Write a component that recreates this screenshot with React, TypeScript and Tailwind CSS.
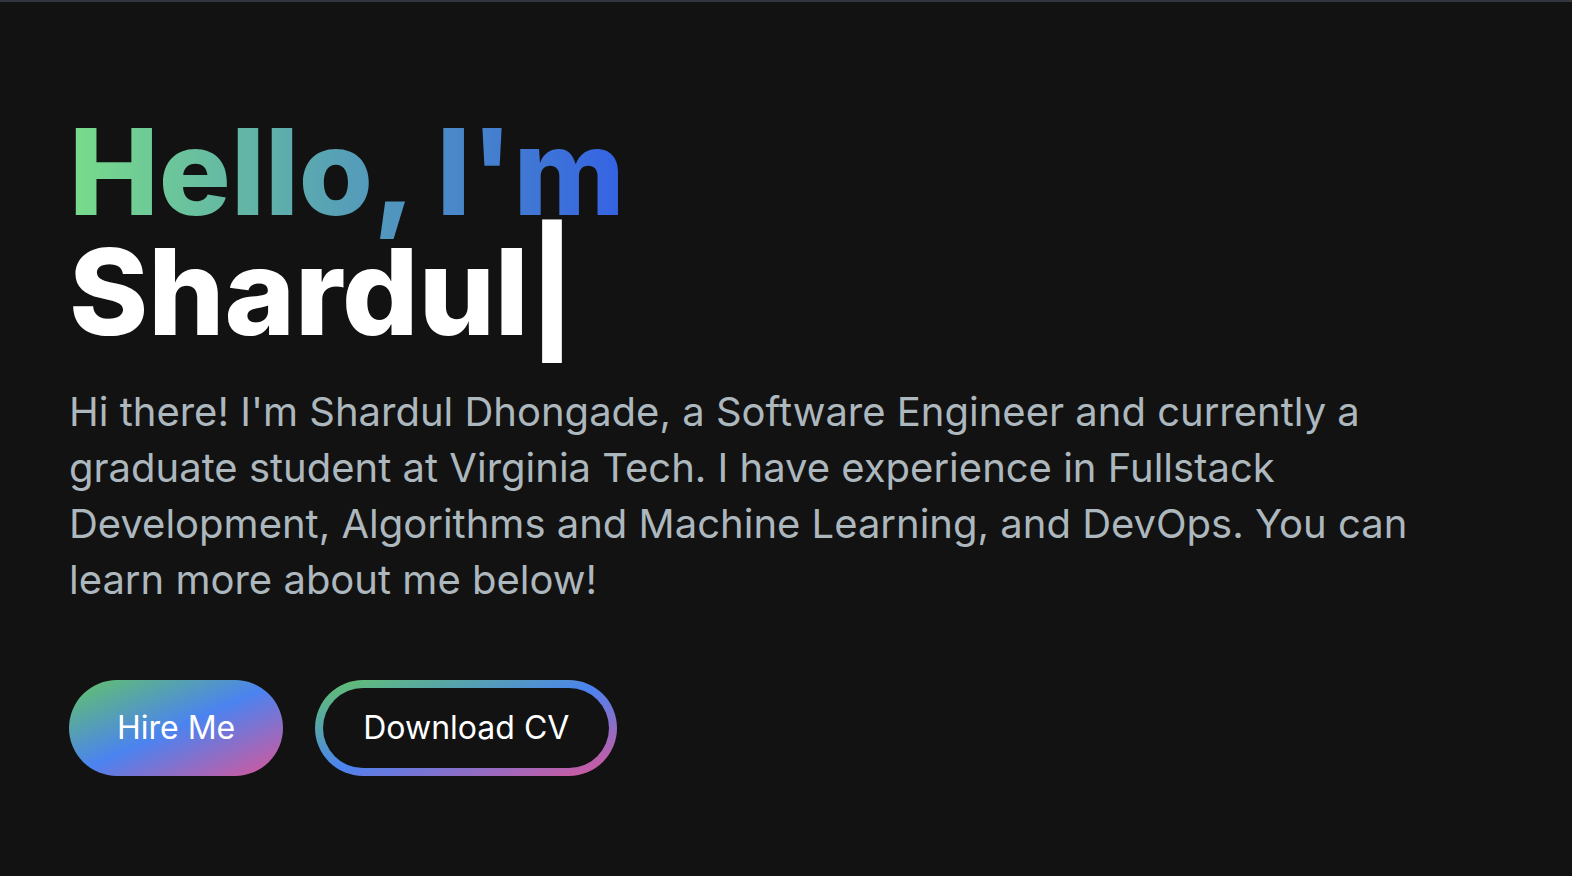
export default function App() {
  return (
    <main className="min-h-screen border-t-2 border-[#33353F] bg-[#121212] px-[69px] pt-[110px] pb-24 font-['Inter',sans-serif]">
      <h1 className="text-[120px] leading-[120px] font-extrabold text-white">
        <span className="bg-linear-to-r/srgb from-[#78dc8a] to-[#3462e4] bg-clip-text text-transparent">Hello, I'm </span>
        <br />
        <span>Shardul|</span>
      </h1>
      <p className="mt-8 max-w-[1360px] text-[40px] leading-[56px] text-[#ADB7BE]">
        Hi there! I'm Shardul Dhongade, a Software Engineer and currently a graduate student at Virginia Tech. I have experience in Fullstack Development, Algorithms and Machine Learning, and DevOps. You can learn more about me below!
      </p>
      <div className="mt-[72px] flex flex-wrap gap-8 text-[32px] leading-[48px] text-white">
        <a href="#contact" className="rounded-full bg-linear-to-br/srgb from-[#63c466] via-[#4b83f0] to-[#da5597] px-12 py-6">Hire Me</a>
        <a href="#cv" className="rounded-full bg-linear-to-br/srgb from-[#63c466] via-[#4b83f0] to-[#da5597] p-2">
          <span className="block rounded-full bg-[#121212] px-10 py-4">Download CV</span>
        </a>
      </div>
    </main>
  );
}
